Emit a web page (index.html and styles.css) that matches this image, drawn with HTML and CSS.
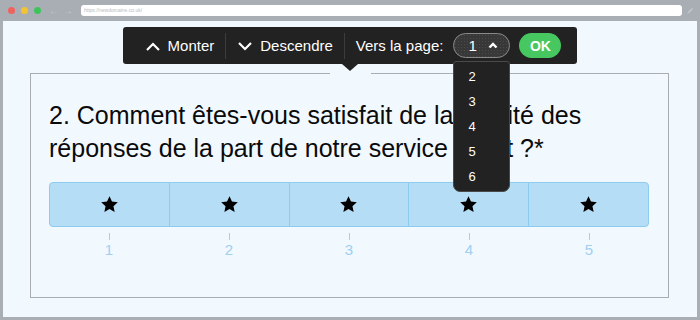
FILE: index.html
```html
<!DOCTYPE html>
<html lang="fr">
<head>
    <meta charset="UTF-8">
    <meta name="viewport" content="width=device-width, initial-scale=1.0">
    <title>Questionnaire</title>
    <link rel="stylesheet" href="styles.css">
</head>
<body>
    <div class="browser">
        <div class="chrome">
            <span class="dot red"></span>
            <span class="dot yellow"></span>
            <span class="dot green"></span>
            <span class="nav">&#8592;</span>
            <span class="nav">&#8594;</span>
            <div class="url">https://newdomaine.co.uk/</div>
            <svg class="edit" width="8" height="8" viewBox="0 0 8 8"><path d="M1 7 L2 5 L6 1 L7 2 L3 6 Z" fill="#c3c7cc"/></svg>
        </div>

        <div class="viewport">
            <div class="toolbar">
                <div class="tb-item">
                    <svg width="16" height="10" viewBox="0 0 16 10"><polyline points="2,9 8,3 14,9" fill="none" stroke="#fff" stroke-width="2.2"/></svg>
                    <span>Monter</span>
                </div>
                <div class="tb-sep"></div>
                <div class="tb-item">
                    <svg width="16" height="10" viewBox="0 0 16 10"><polyline points="2,2 8,8 14,2" fill="none" stroke="#fff" stroke-width="2.2"/></svg>
                    <span>Descendre</span>
                </div>
                <div class="tb-sep"></div>
                <span class="tb-label">Vers la page:</span>
                <div class="page-select">
                    <div class="pill">
                        <span>1</span>
                        <svg width="10" height="7" viewBox="0 0 10 7"><polyline points="1.5,5.5 5,2 8.5,5.5" fill="none" stroke="#fff" stroke-width="2.4"/></svg>
                    </div>
                    <ul class="page-list">
                        <li>2</li>
                        <li>3</li>
                        <li>4</li>
                        <li>5</li>
                        <li>6</li>
                    </ul>
                </div>
                <button class="ok">OK</button>
            </div>

            <div class="card">
                <h2 class="question">2. Comment êtes-vous satisfait de la qualité des réponses de la part de notre service client ?*</h2>
                <div class="rating">
                    <div class="cell"><svg width="19" height="19" viewBox="0 0 24 24"><polygon points="12,1.5 15.1,8.3 22.5,9.1 17,14.1 18.5,21.5 12,17.8 5.5,21.5 7,14.1 1.5,9.1 8.9,8.3"/></svg></div>
                    <div class="cell"><svg width="19" height="19" viewBox="0 0 24 24"><polygon points="12,1.5 15.1,8.3 22.5,9.1 17,14.1 18.5,21.5 12,17.8 5.5,21.5 7,14.1 1.5,9.1 8.9,8.3"/></svg></div>
                    <div class="cell"><svg width="19" height="19" viewBox="0 0 24 24"><polygon points="12,1.5 15.1,8.3 22.5,9.1 17,14.1 18.5,21.5 12,17.8 5.5,21.5 7,14.1 1.5,9.1 8.9,8.3"/></svg></div>
                    <div class="cell"><svg width="19" height="19" viewBox="0 0 24 24"><polygon points="12,1.5 15.1,8.3 22.5,9.1 17,14.1 18.5,21.5 12,17.8 5.5,21.5 7,14.1 1.5,9.1 8.9,8.3"/></svg></div>
                    <div class="cell"><svg width="19" height="19" viewBox="0 0 24 24"><polygon points="12,1.5 15.1,8.3 22.5,9.1 17,14.1 18.5,21.5 12,17.8 5.5,21.5 7,14.1 1.5,9.1 8.9,8.3"/></svg></div>
                </div>
                <div class="scale">
                    <div class="mark"><span class="tick"></span>1</div>
                    <div class="mark"><span class="tick"></span>2</div>
                    <div class="mark"><span class="tick"></span>3</div>
                    <div class="mark"><span class="tick"></span>4</div>
                    <div class="mark"><span class="tick"></span>5</div>
                </div>
            </div>
        </div>
    </div>
</body>
</html>
```

FILE: styles.css
```css
html, body {
    margin: 0;
    padding: 0;
}
body {
    font-family: "Liberation Sans", Arial, sans-serif;
    width: 700px;
    height: 320px;
    overflow: hidden;
}
.browser {
    display: flex;
    flex-direction: column;
    height: 320px;
    background: #a9aeb4;
}

/* barre du navigateur */
.chrome {
    display: flex;
    align-items: center;
    height: 21px;
    padding: 0 6px 0 8px;
    box-sizing: border-box;
}
.dot {
    width: 7px;
    height: 7px;
    border-radius: 50%;
    margin-right: 6px;
}
.red { background: #f0625e; }
.yellow { background: #f3c331; }
.green { background: #3ec35b; }
.nav {
    color: #c5c9ce;
    font-size: 10px;
    margin-left: 2px;
    margin-right: 2px;
}
.url {
    flex: 1;
    height: 11px;
    margin-left: 6px;
    background: #fff;
    border-radius: 3px;
    font-size: 5px;
    line-height: 11px;
    color: #b9bcc0;
    padding-left: 3px;
}
.edit {
    margin-left: 4px;
}

.viewport {
    flex: 1;
    display: flex;
    flex-direction: column;
    align-items: center;
    margin: 0 3px 3px;
    background: #f1f8fe;
}

/* barre d'outils */
.toolbar {
    position: relative;
    display: flex;
    align-items: center;
    height: 37px;
    margin-top: 6px;
    padding: 0 16px 0 22px;
    background: #222;
    border-radius: 3px;
    color: #fff;
    font-size: 15px;
    z-index: 2;
}
.toolbar::after {
    content: "";
    position: absolute;
    left: 50%;
    bottom: -7px;
    margin-left: -8px;
    border-left: 8px solid transparent;
    border-right: 8px solid transparent;
    border-top: 7px solid #222;
}
.tb-item {
    display: flex;
    align-items: center;
    gap: 7px;
}
.tb-sep {
    width: 1px;
    height: 26px;
    background: #3c3c3c;
    margin: 0 11px;
}
.tb-label {
    margin-right: 10px;
}
.page-select {
    position: relative;
}
.pill {
    display: flex;
    align-items: center;
    justify-content: space-between;
    width: 57px;
    height: 25px;
    box-sizing: border-box;
    padding: 0 11px 0 14px;
    border: 1px solid #8a8a8a;
    border-radius: 13px;
    background-color: #383838;
    background-image: radial-gradient(#4a4a4a 0.6px, transparent 0.8px);
    background-size: 3px 3px;
}
.page-list {
    position: absolute;
    top: 28px;
    left: 0;
    width: 57px;
    height: 131px;
    box-sizing: border-box;
    margin: 0;
    padding: 2px 0 0 14px;
    list-style: none;
    background: #222;
    border: 1px solid #4a4a4a;
    border-radius: 3px 3px 7px 7px;
    font-size: 13px;
}
.page-list li {
    height: 25px;
    line-height: 25px;
}
.ok {
    margin-left: 9px;
    width: 42px;
    height: 25px;
    border: none;
    border-radius: 13px;
    background: #47c760;
    color: #fff;
    font-family: inherit;
    font-size: 14px;
    font-weight: bold;
    padding: 0;
}

/* question */
.card {
    position: relative;
    align-self: stretch;
    flex: 1;
    margin: 9px 28px 19px 27px;
    padding: 25px 19px 0 18px;
    border: 1px solid #a9adb2;
}
.card::before {
    content: "";
    position: absolute;
    top: -1px;
    left: 50%;
    width: 41px;
    height: 1px;
    margin-left: -20px;
    background: #f1f8fe;
}
.question {
    margin: 0;
    font-size: 25px;
    font-weight: normal;
    line-height: 33px;
    color: #0a0a0a;
}
.rating {
    display: flex;
    margin-top: 17px;
    width: 600px;
    height: 45px;
    box-sizing: border-box;
    background: #b5ddf5;
    border: 1px solid #8dcbef;
    border-radius: 4px;
}
.cell {
    flex: 1;
    display: flex;
    align-items: center;
    justify-content: center;
    border-left: 1px solid #8dcbef;
}
.cell:first-child {
    border-left: none;
}
.scale {
    display: flex;
    width: 600px;
}
.mark {
    flex: 1;
    display: flex;
    flex-direction: column;
    align-items: center;
    color: #9fd0f0;
    font-size: 15px;
    line-height: 17px;
}
.tick {
    width: 1px;
    height: 7px;
    margin: 6px 0 1px;
    background: #9fd0f0;
}
```
